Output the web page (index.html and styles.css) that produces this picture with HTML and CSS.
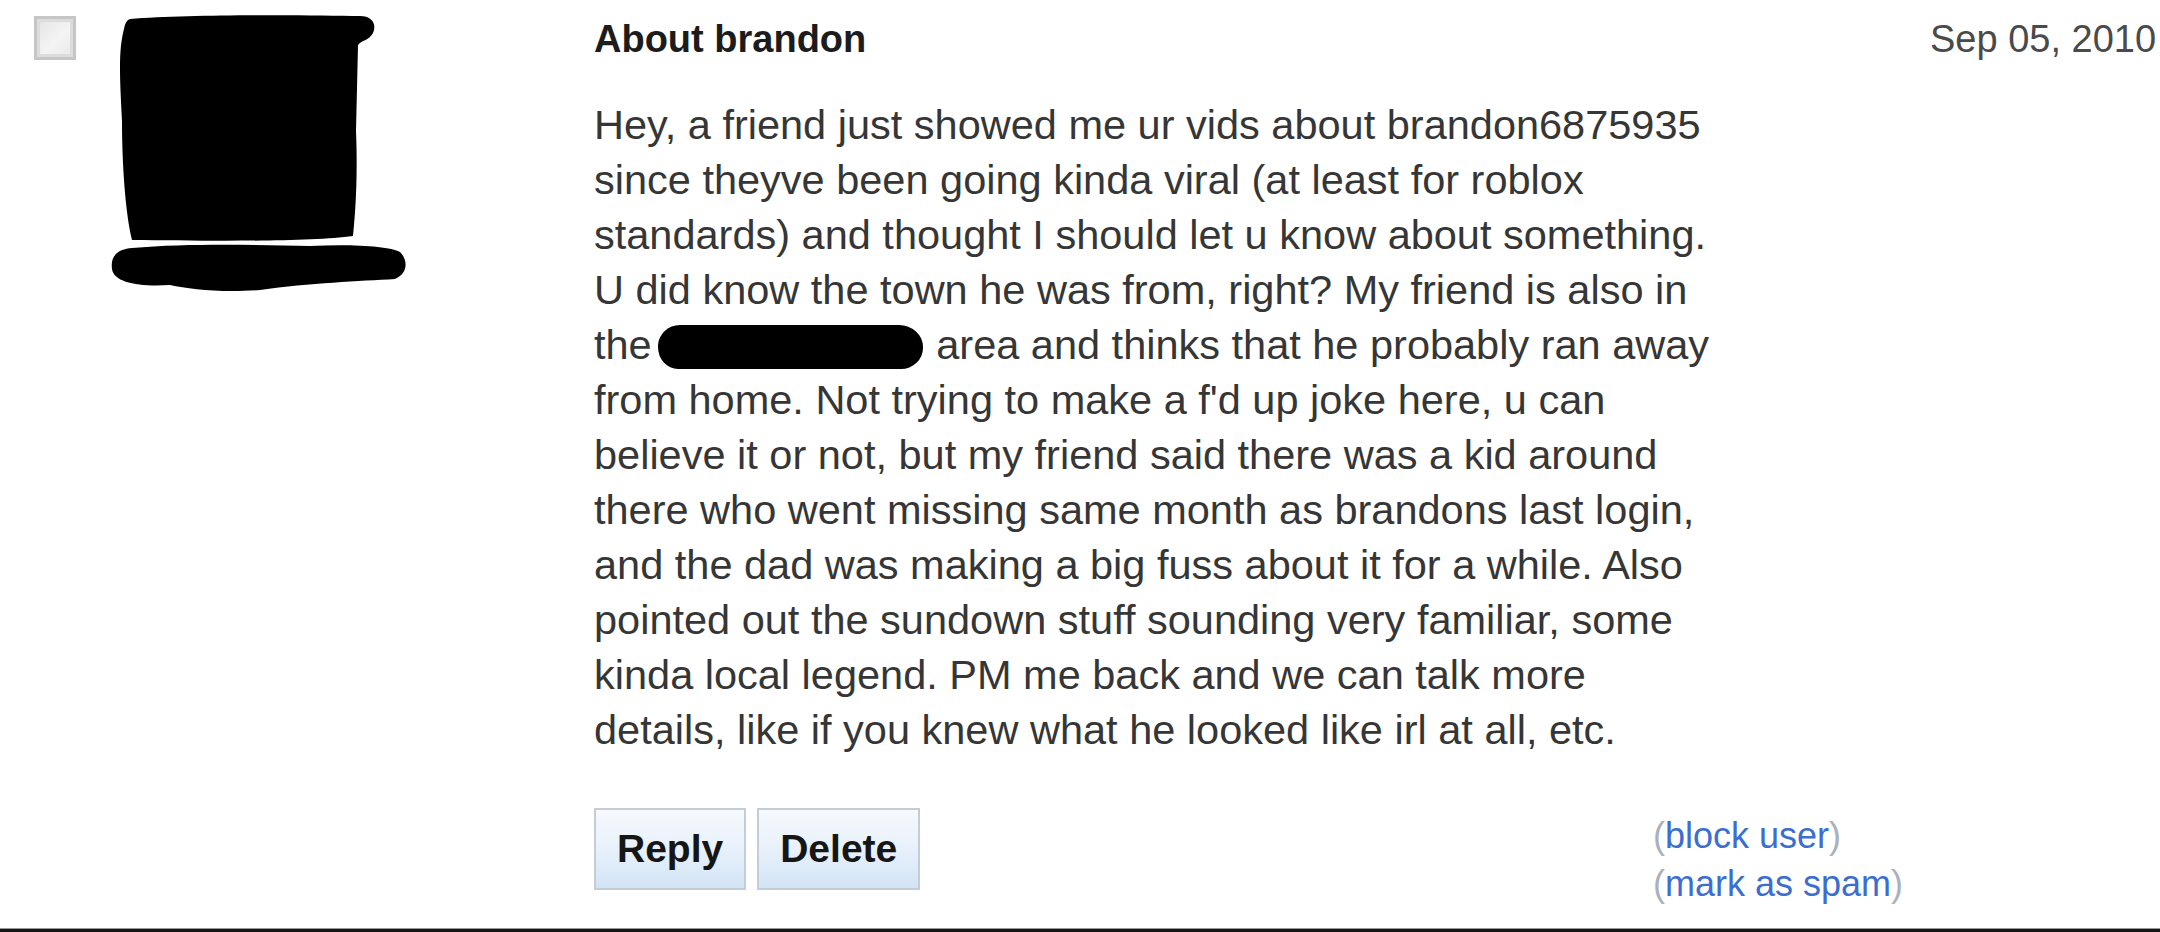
FILE: index.html
```html
<!DOCTYPE html>
<html lang="en">
<head>
<meta charset="utf-8">
<title>Inbox message</title>
<link rel="stylesheet" href="styles.css">
</head>
<body>
<div class="msg">
  <div class="check-col"><span class="checkbox"></span></div>
  <div class="avatar-col">
    <svg class="avatar" width="300" height="290" viewBox="0 0 300 290" aria-hidden="true">
      <path d="M20 8 C80 3 200 4 250 5 C262 5 267 13 263 22 C259 30 251 29 248 34 L246 120 C248 170 245 205 243 225 C200 231 100 230 22 229 C15 200 12 150 12 110 C10 70 8 40 14 18 C15 12 17 9 20 8 Z" fill="#000"/>
      <path d="M22 237 C80 232 150 234 200 235 C240 233 280 235 290 241 C299 250 297 263 285 268 C250 270 200 272 150 279 C110 282 80 278 60 274 C30 276 4 272 2 258 C0 243 10 238 22 237 Z" fill="#000"/>
    </svg>
  </div>
  <div class="content">
    <div class="top">
      <div class="text">
        <div class="subject">About brandon</div>
        <div class="body">Hey, a friend just showed me ur vids about brandon6875935<br>since theyve been going kinda viral (at least for roblox<br>standards) and thought I should let u know about something.<br>U did know the town he was from, right? My friend is also in<br>the<span class="redact"></span> area and thinks that he probably ran away<br>from home. Not trying to make a f'd up joke here, u can<br>believe it or not, but my friend said there was a kid around<br>there who went missing same month as brandons last login,<br>and the dad was making a big fuss about it for a while. Also<br>pointed out the sundown stuff sounding very familiar, some<br>kinda local legend. PM me back and we can talk more<br>details, like if you knew what he looked like irl at all, etc.</div>
      </div>
      <div class="date">Sep 05, 2010</div>
    </div>
    <div class="footer">
      <div class="buttons">
        <button class="btn" type="button">Reply</button>
        <button class="btn" type="button">Delete</button>
      </div>
      <div class="links">
        <div class="link-line"><span class="paren">(</span><a href="#">block user</a><span class="paren">)</span></div>
        <div class="link-line"><span class="paren">(</span><a href="#">mark as spam</a><span class="paren">)</span></div>
      </div>
    </div>
  </div>
</div>
<div class="divider"></div>
</body>
</html>
```
FILE: styles.css
```css
html, body {
  margin: 0;
  padding: 0;
  background: #ffffff;
  overflow: hidden;
}

body {
  width: 2160px;
  height: 932px;
  font-family: "Liberation Sans", Arial, sans-serif;
  color: #333333;
}

.msg {
  display: flex;
  align-items: flex-start;
  padding-top: 16px;
  padding-bottom: 20px;
  height: 928px;
  box-sizing: border-box;
}

.check-col {
  margin-left: 34px;
  width: 42px;
  flex: none;
}

.checkbox {
  display: block;
  width: 42px;
  height: 44px;
  margin-top: 0;
  box-sizing: border-box;
  border: 3px solid #c6c6c6;
  background: linear-gradient(135deg, #e4e4e4 0%, #f4f4f4 55%, #e8e8e8 100%);
  box-shadow: inset 0 0 0 3px #dcdcdc;
}

.avatar-col {
  margin-left: 34px;
  width: 300px;
  flex: none;
  margin-top: -5px;
}

.avatar {
  display: block;
}

.content {
  margin-left: 184px;
  flex: 1;
  display: flex;
  flex-direction: column;
  min-width: 0;
}

.top {
  display: flex;
  align-items: flex-start;
}

.text {
  flex: 0 0 1336px;
}

.subject {
  font-weight: bold;
  font-size: 38px;
  line-height: 46px;
  color: #1c1c1c;
  margin-bottom: 35px;
}

.body {
  font-size: 41.5px;
  line-height: 55px;
  color: #363636;
  white-space: nowrap;
}

.redact {
  display: inline-block;
  width: 265px;
  height: 44px;
  margin-left: 6px;
  margin-right: 2px;
  background: #000000;
  border-radius: 22px 24px 22px 20px / 21px 22px 21px 22px;
  vertical-align: -10px;
}

.date {
  flex: none;
  font-size: 38px;
  line-height: 46px;
  color: #4a4a4a;
  white-space: nowrap;
}

.footer {
  display: flex;
  align-items: flex-start;
  margin-top: 51px;
}

.buttons {
  flex: 0 0 1059px;
  display: flex;
  gap: 11px;
}

.btn {
  height: 82px;
  box-sizing: border-box;
  padding: 0 21px;
  border: 2px solid #c4ccd5;
  border-radius: 0;
  background: linear-gradient(180deg, #f6f9fd 0%, #e8f1fb 50%, #d2e4f6 100%);
  font-family: "Liberation Sans", Arial, sans-serif;
  font-weight: bold;
  font-size: 39px;
  color: #161616;
  cursor: pointer;
}

.links {
  margin-top: 4px;
  font-size: 36px;
  line-height: 48px;
}

.link-line {
  white-space: nowrap;
}

.links a {
  color: #3c6ed2;
  text-decoration: none;
}

.paren {
  color: #a9b1be;
}

.divider {
  height: 3px;
  border-top: 1px solid #9a9a9a;
  background: #151515;
}
```
